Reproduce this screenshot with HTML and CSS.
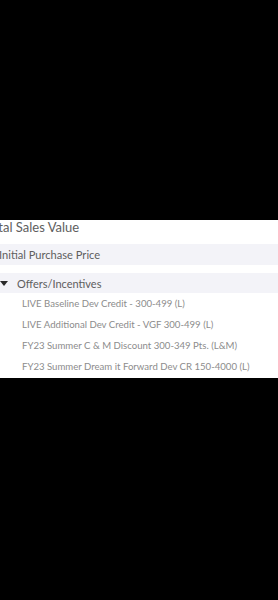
FILE: index.html
```html
<!DOCTYPE html>
<html>
<head>
<meta charset="utf-8">
<link rel="stylesheet" href="styles.css">
</head>
<body>
<div class="top"></div>
<div class="panel">
  <div class="row total"><span class="t-total">Total Sales Value</span></div>
  <div class="row shaded price"><span class="t-price">Initial Purchase Price</span></div>
  <div class="row shaded offers"><span class="caret"></span><span class="t-offers">Offers/Incentives</span></div>
  <ul class="items">
    <li>LIVE Baseline Dev Credit - 300-499 (L)</li>
    <li>LIVE Additional Dev Credit - VGF 300-499 (L)</li>
    <li>FY23 Summer C &amp; M Discount 300-349 Pts. (L&amp;M)</li>
    <li>FY23 Summer Dream it Forward Dev CR 150-4000 (L)</li>
  </ul>
</div>
</body>
</html>
```

FILE: styles.css
```css
html, body {
  margin: 0;
  padding: 0;
  background: #000;
  width: 278px;
  height: 600px;
  overflow: hidden;
}
body {
  font-family: Lato, "Open Sans", sans-serif;
}
.top {
  height: 220px;
}
.panel {
  background: #fff;
  height: 158px;
  overflow: hidden;
  display: flex;
  flex-direction: column;
}
.row {
  display: flex;
  align-items: center;
  white-space: nowrap;
  color: #5e5e5e;
}
.shaded {
  background: #f3f3f8;
}
.total {
  height: 24px;
  align-items: flex-start;
  line-height: 15px;
  font-size: 13px;
}
.t-total {
  margin-left: -15px;
}
.price {
  height: 21px;
  font-size: 11.1px;
}
.t-price {
  margin-left: -1px;
}
.offers {
  margin-top: 8px;
  height: 20px;
  font-size: 11px;
}
.caret {
  width: 0;
  height: 0;
  margin-right: 9px;
  border-left: 4px solid transparent;
  border-right: 4px solid transparent;
  border-top: 5px solid #2a2a2a;
}
.items {
  list-style: none;
  margin: 0;
  padding: 0 0 0 22px;
}
.items li {
  height: 21px;
  line-height: 21px;
  font-size: 9.6px;
  color: #8c8c8c;
  white-space: nowrap;
}
```
